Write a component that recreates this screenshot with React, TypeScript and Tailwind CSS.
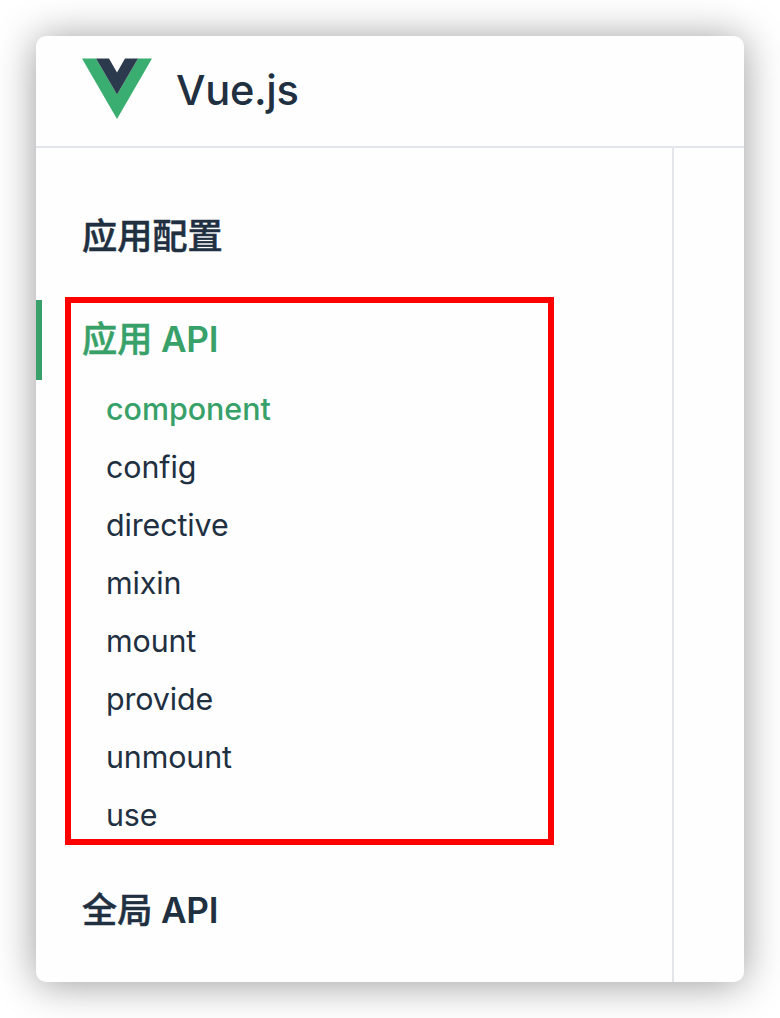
const methods = ["component", "config", "directive", "mixin", "mount", "provide", "unmount", "use"];

function Logo() {
  return (
    <svg width="70" height="61" viewBox="0 0 70 61" className="shrink-0">
      <path d="M0 .5H14L35 36.5L56 .5H70L35 61Z" fill="#3aae70" />
      <path d="M14 .5H27L35 14.5L43 .5H56L35 36.5Z" fill="#2b3a4d" />
    </svg>
  );
}

function Title({ text, latin }: { text: string; latin?: string }) {
  return (
    <>
      <span className="[-webkit-text-stroke:0.5px_currentColor]">{text}</span>
      {latin && <span className="font-semibold tracking-[-0.3px]"> {latin}</span>}
    </>
  );
}

export default function App() {
  return (
    <div className="h-[1018px] w-[780px] overflow-hidden bg-white p-9 text-[#213041] font-['Inter','Noto_Sans_CJK_SC',sans-serif]">
      <div className="flex h-[946px] w-[708px] flex-col rounded-[10px] bg-[#fefefe] shadow-[0_2px_40px_rgba(0,0,0,0.4)]">
        <header className="flex h-28 shrink-0 gap-[25px] border-b-2 border-[#e2e6eb] pl-[46px] pt-[22px]">
          <Logo />
          <span className="mt-[2px] -ml-px text-[41.6px] leading-[60px] font-medium tracking-[-0.3px]">Vue.js</span>
        </header>
        <div className="flex flex-1">
          <aside className="flex w-[638px] flex-col border-r-2 border-[#e2e6eb]">
            <h2 className="mt-[60px] pl-[46px] text-[35.2px] leading-[56px] font-medium"><Title text="应用配置" /></h2>
            <div className="mt-[33px] flex">
              <div className="mt-[3px] h-20 w-[6px] bg-[#38a169]" />
              <section className="ml-[23px] h-[548px] w-[489px] border-6 border-[#fe0000] pl-[11px] pt-1">
                <h2 className="text-[35.2px] leading-[64px] font-medium text-[#38a169]"><Title text="应用" latin="API" /></h2>
                <ul className="mt-[9px] pl-6 text-[30.4px] leading-[58px]">
                  {methods.map((name, i) => (
                    <li key={name} className={i === 0 ? "font-medium text-[#38a169]" : "tracking-[-0.1px]"}>{name}</li>
                  ))}
                </ul>
              </section>
            </div>
            <h2 className="mt-[37px] pl-[46px] text-[35.2px] leading-[56px] font-medium"><Title text="全局" latin="API" /></h2>
          </aside>
        </div>
      </div>
    </div>
  );
}
